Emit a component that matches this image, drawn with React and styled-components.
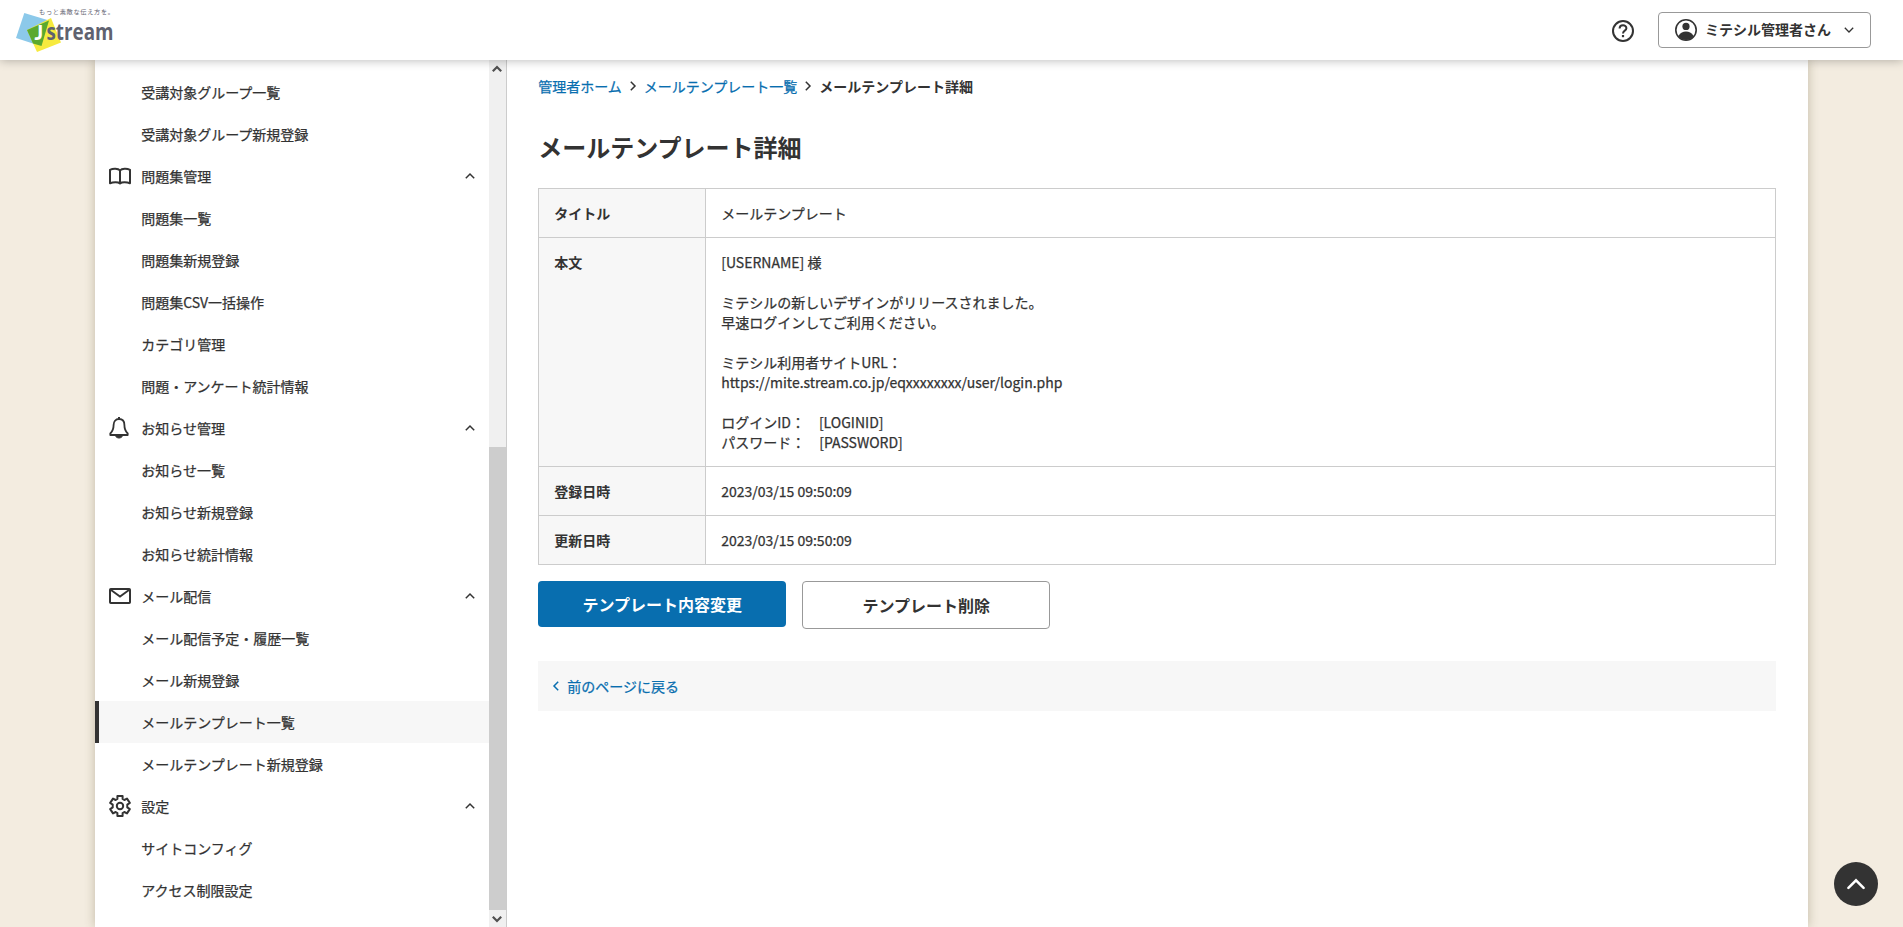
import React from "react";
import styled, { createGlobalStyle, css } from "styled-components";

const GlobalStyle = createGlobalStyle`
  * {
    box-sizing: border-box;
  }

  body {
    margin: 0;
    height: 927px;
    overflow: hidden;
    background-color: #f3ece0;
    color: #333;
    font-family: "Noto Sans CJK JP", sans-serif;
    font-size: 14px;
    font-weight: 400;
    line-height: 20px;
    -webkit-text-stroke: 0.25px;
  }

  a {
    color: inherit;
    text-decoration: none;
  }

  button,
  strong,
  h1,
  th,
  text {
    -webkit-text-stroke: 0;
  }
`;

const Page = styled.div`
  display: flex;
  flex-direction: column;
  height: 927px;
`;

const Header = styled.header`
  display: flex;
  flex-shrink: 0;
  justify-content: space-between;
  height: 60px;
  padding: 0 32px 0 16px;
  background-color: #fff;
  box-shadow: 0 0 10px rgba(0, 0, 0, 0.3);
  z-index: 2;
`;

const Logo = styled.svg`
  display: block;
  margin-top: 6px;
  overflow: visible;
`;

const HeaderMenu = styled.div`
  display: flex;
  align-items: center;
  gap: 24px;

  .help {
    display: block;
    margin-top: 2px;
  }
`;

const UserButton = styled.button`
  display: flex;
  align-items: center;
  width: 213px;
  height: 36px;
  padding: 0 16px;
  border: 1px solid #999;
  border-radius: 4px;
  background-color: #fff;
  color: #333;
  font-family: inherit;
  font-size: 14px;
  font-weight: 700;
  white-space: nowrap;

  .name {
    flex: 1;
    margin-left: 8px;
    padding-bottom: 2px;
    text-align: left;
  }
`;

const Container = styled.div`
  display: flex;
  flex: 1;
  width: 90%;
  min-height: 0;
  margin: 0 auto;
  background-color: #fff;
  box-shadow: 0 0 10px rgba(80, 70, 30, 0.3);
`;

const Sidebar = styled.div`
  display: flex;
  flex-shrink: 0;
  width: 412px;
  border-right: 1px solid #ccc;
`;

const Nav = styled.nav`
  flex: 1;
  padding-top: 11px;
`;

const NavItem = styled.a`
  display: flex;
  align-items: center;
  height: 42px;
  padding: 0 14px 0 46px;

  ${({ $section }) =>
    $section &&
    css`
      padding-left: 14px;
    `}

  ${({ $active }) =>
    $active &&
    css`
      padding-left: 42px;
      border-left: 4px solid #333;
      background-color: #f7f7f7;
    `}

  .icon {
    display: flex;
    width: 32px;
  }

  .label {
    flex: 1;
  }
`;

const ScrollBar = styled.div`
  display: flex;
  flex-direction: column;
  width: 17px;
  background-color: #f0f0f0;

  .arrow {
    display: flex;
    align-items: center;
    justify-content: center;
    height: 17px;
    padding: 0 1px 0 0;
  }

  .space {
    height: 370px;
  }

  .thumb {
    flex: 1;
    width: 17px;
    background-color: #cdcdcd;
  }
`;

const Main = styled.main`
  flex: 1;
  padding: 16px 32px 0 31px;
`;

const Breadcrumb = styled.div`
  display: flex;
  align-items: center;

  a {
    color: #086eaf;
  }

  svg {
    margin: 0 6px;
  }

  strong {
    font-weight: 700;
  }
`;

const Title = styled.h1`
  margin: 33px 0 23px;
  font-size: 24px;
  font-weight: 700;
  line-height: 36px;
`;

const Table = styled.table`
  width: 100%;
  border-collapse: collapse;

  th,
  td {
    padding: 14px 15px;
    border: 1px solid #ccc;
    text-align: left;
    vertical-align: top;
  }

  th {
    width: 167px;
    background-color: #f7f7f7;
    font-weight: 700;
  }

  td {
    white-space: pre-line;
  }
`;

const Buttons = styled.div`
  display: flex;
  align-items: flex-start;
  gap: 16px;
  margin-top: 16px;
`;

const Button = styled.button`
  width: 248px;
  height: ${({ $primary }) => ($primary ? "46px" : "48px")};
  padding: 0;
  border: ${({ $primary }) => ($primary ? "none" : "1px solid #999")};
  border-radius: 4px;
  background-color: ${({ $primary }) => ($primary ? "#086eaf" : "#fff")};
  color: ${({ $primary }) => ($primary ? "#fff" : "#333")};
  font-family: inherit;
  font-size: 16px;
  font-weight: 700;
  line-height: 24px;
`;

const BackBar = styled.div`
  display: flex;
  align-items: center;
  height: 50px;
  margin-top: 32px;
  padding-left: 13px;
  background-color: #f7f7f7;
  color: #086eaf;

  svg {
    margin-right: 6px;
  }
`;

const PageTop = styled.button`
  position: fixed;
  right: 25px;
  bottom: 21px;
  display: flex;
  align-items: center;
  justify-content: center;
  width: 44px;
  height: 44px;
  padding: 0;
  border: none;
  border-radius: 50%;
  background-color: #333;
`;

const rotations = { up: 0, right: 90, down: 180, left: 270 };

const Chevron = ({ dir = "up", size = 10, stroke = 1.5, color = "#333", round }) => (
  <svg width={size} height={size} viewBox="0 0 10 10" fill="none">
    <path
      d="M0.8 7.2L5 3L9.2 7.2"
      stroke={color}
      strokeWidth={stroke}
      strokeLinecap={round ? "round" : "butt"}
      transform={`rotate(${rotations[dir]} 5 5)`}
    />
  </svg>
);

const BookIcon = () => (
  <svg width="22" height="22" viewBox="0 0 22 22" fill="none">
    <path
      d="M11 5.4C9 3.2 4 3.2 1 4.8V18.2C4 17 9 16.6 11 18.4C13 16.6 18 17 21 18.2V4.8C18 3.2 13 3.2 11 5.4ZM11 5.4V18"
      stroke="#333"
      strokeWidth="2"
      strokeLinejoin="round"
    />
  </svg>
);

const BellIcon = () => (
  <svg width="20" height="22" viewBox="0 0 20 22" fill="none">
    <path
      d="M10 2C6.5 2 4.6 4.6 4.6 8C4.6 12.5 3.4 14.5 1.3 16.5V18H18.7V16.5C16.6 14.5 15.4 12.5 15.4 8C15.4 4.6 13.5 2 10 2Z"
      stroke="#333"
      strokeWidth="1.8"
      strokeLinejoin="round"
    />
    <path d="M10 0V2" stroke="#333" strokeWidth="2" />
    <path d="M6.3 18.6C7.5 21.8 12.5 21.8 13.7 18.6" fill="#333" stroke="#333" />
  </svg>
);

const MailIcon = () => (
  <svg width="22" height="16" viewBox="0 0 22 16" fill="none">
    <rect x="1" y="1" width="20" height="14" rx="0.8" stroke="#333" strokeWidth="2" />
    <path d="M2 2L11 8.6L20 2" stroke="#333" strokeWidth="1.8" />
  </svg>
);

const GearIcon = () => (
  <svg width="22" height="22" viewBox="0 0 22 22" fill="none">
    <path
      d="M8.4 1H13.6V4L15.3 5L18 3.6L20.8 7.9L18.3 9.6V12.4L20.8 14.1L18 18.4L15.3 17L13.6 18V21H8.4V18L6.7 17L4 18.4L1.2 14.1L3.7 12.4V9.6L1.2 7.9L4 3.6L6.7 5L8.4 4Z"
      stroke="#333"
      strokeWidth="2"
      strokeLinejoin="round"
    />
    <circle cx="11" cy="11" r="3.2" stroke="#333" strokeWidth="2" />
  </svg>
);

const HelpIcon = () => (
  <svg className="help" width="22" height="22" viewBox="0 0 22 22" fill="none">
    <circle cx="11" cy="11" r="10" stroke="#333" strokeWidth="2" />
    <path
      d="M7.6 8.6C7.6 4.3 14.4 4.3 14.4 8.3C14.4 10.8 11 10.6 11 13.4"
      stroke="#333"
      strokeWidth="2"
    />
    <rect x="9.9" y="15" width="2.2" height="2.2" fill="#333" />
  </svg>
);

const UserIcon = () => (
  <svg width="22" height="22" viewBox="0 0 22 22" fill="none">
    <circle cx="11" cy="11" r="10.2" stroke="#333" strokeWidth="1.6" />
    <circle cx="11" cy="7.4" r="3.6" fill="#333" />
    <path
      d="M3.4 17C5.5 13.7 8 12.6 11 12.6C14 12.6 16.5 13.7 18.6 17C16.8 19.6 14 21 11 21C8 21 5.2 19.6 3.4 17Z"
      fill="#333"
    />
  </svg>
);

const JstreamLogo = () => (
  <Logo width="100" height="48" viewBox="16 6 100 48">
    <polygon points="24.3,13 49,20.5 42,46.5 16,38" fill="#8cc9ea" />
    <polygon points="27,30 51,18 61,42.5 37,52" fill="#f7ea3e" />
    <polygon points="27,30 49,20.5 41.5,46 33,43.5" fill="#5ba92f" />
    <g fontFamily="Noto Sans CJK JP, sans-serif">
      <text x="39" y="14" fontSize="6.2" fill="#5f6270" textLength="75">
        もっと素敵な伝え方を。
      </text>
    </g>
    <g fontFamily="Lato, sans-serif" fontWeight="900">
      <text x="34.5" y="39.5" fontSize="20" fill="#fff">
        J
      </text>
    </g>
    <g fontFamily="Open Sans, sans-serif" fontWeight="700">
      <text x="46.5" y="40" fontSize="23" fill="#5f6270" textLength="67" lengthAdjust="spacingAndGlyphs">
        stream
      </text>
    </g>
  </Logo>
);

const navItems = [
  { label: "受講対象グループ一覧" },
  { label: "受講対象グループ新規登録" },
  { label: "問題集管理", Icon: BookIcon },
  { label: "問題集一覧" },
  { label: "問題集新規登録" },
  { label: "問題集CSV一括操作" },
  { label: "カテゴリ管理" },
  { label: "問題・アンケート統計情報" },
  { label: "お知らせ管理", Icon: BellIcon },
  { label: "お知らせ一覧" },
  { label: "お知らせ新規登録" },
  { label: "お知らせ統計情報" },
  { label: "メール配信", Icon: MailIcon },
  { label: "メール配信予定・履歴一覧" },
  { label: "メール新規登録" },
  { label: "メールテンプレート一覧", active: true },
  { label: "メールテンプレート新規登録" },
  { label: "設定", Icon: GearIcon },
  { label: "サイトコンフィグ" },
  { label: "アクセス制限設定" },
];

const template = [
  { name: "タイトル", value: "メールテンプレート" },
  {
    name: "本文",
    value: `[USERNAME] 様

ミテシルの新しいデザインがリリースされました。
早速ログインしてご利用ください。

ミテシル利用者サイトURL：
https://mite.stream.co.jp/eqxxxxxxxx/user/login.php

ログインID：　[LOGINID]
パスワード：　[PASSWORD]`,
  },
  { name: "登録日時", value: "2023/03/15 09:50:09" },
  { name: "更新日時", value: "2023/03/15 09:50:09" },
];

const App = () => {
  return (
    <Page>
      <GlobalStyle />
      <Header>
        <JstreamLogo />
        <HeaderMenu>
          <HelpIcon />
          <UserButton>
            <UserIcon />
            <span className="name">ミテシル管理者さん</span>
            <Chevron dir="down" stroke={1.3} />
          </UserButton>
        </HeaderMenu>
      </Header>

      <Container>
        <Sidebar>
          <Nav>
            {navItems.map(({ label, Icon, active }) => (
              <NavItem key={label} href="#" $section={!!Icon} $active={active}>
                {Icon && (
                  <span className="icon">
                    <Icon />
                  </span>
                )}
                <span className="label">{label}</span>
                {Icon && <Chevron />}
              </NavItem>
            ))}
          </Nav>
          <ScrollBar>
            <div className="arrow">
              <Chevron stroke={2.2} color="#505050" />
            </div>
            <div className="space" />
            <div className="thumb" />
            <div className="arrow">
              <Chevron dir="down" stroke={2.2} color="#505050" />
            </div>
          </ScrollBar>
        </Sidebar>

        <Main>
          <Breadcrumb>
            <a href="#">管理者ホーム</a>
            <Chevron dir="right" />
            <a href="#">メールテンプレート一覧</a>
            <Chevron dir="right" />
            <strong>メールテンプレート詳細</strong>
          </Breadcrumb>
          <Title>メールテンプレート詳細</Title>
          <Table>
            <tbody>
              {template.map((row) => (
                <tr key={row.name}>
                  <th>{row.name}</th>
                  <td>{row.value}</td>
                </tr>
              ))}
            </tbody>
          </Table>
          <Buttons>
            <Button $primary>テンプレート内容変更</Button>
            <Button>テンプレート削除</Button>
          </Buttons>
          <BackBar>
            <Chevron dir="left" color="#086eaf" />
            <a href="#">前のページに戻る</a>
          </BackBar>
        </Main>
      </Container>

      <PageTop>
        <Chevron size={18} stroke={1.4} color="#fff" round />
      </PageTop>
    </Page>
  );
};

export default App;
